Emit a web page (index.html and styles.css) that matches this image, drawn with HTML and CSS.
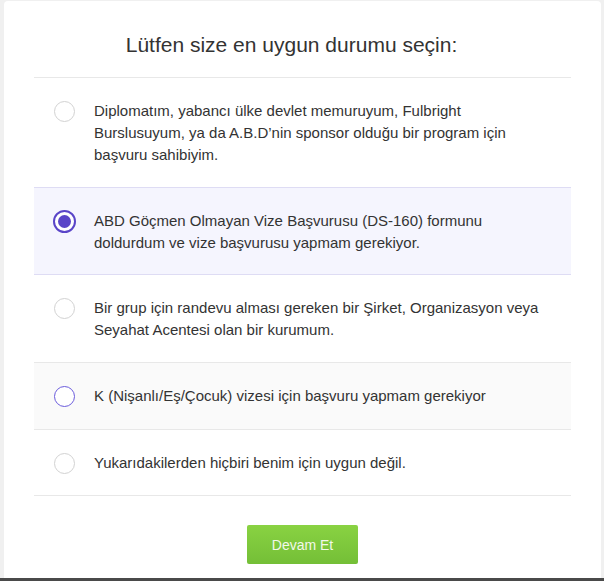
FILE: index.html
```html
<!DOCTYPE html>
<html lang="tr">
<head>
<meta charset="utf-8">
<title>Durum seçimi</title>
<link rel="stylesheet" href="styles.css">
</head>
<body>
<div class="page">
  <div class="card">
    <h1 class="title">Lütfen size en uygun durumu seçin:</h1>
    <ul class="options">
      <li class="option">
        <span class="radio"></span>
        <span class="label">Diplomatım, yabancı ülke devlet memuruyum, Fulbright Burslusuyum, ya da A.B.D’nin sponsor olduğu bir program için başvuru sahibiyim.</span>
      </li>
      <li class="option selected">
        <span class="radio checked"></span>
        <span class="label">ABD Göçmen Olmayan Vize Başvurusu (DS-160) formunu doldurdum ve vize başvurusu yapmam gerekiyor.</span>
      </li>
      <li class="option">
        <span class="radio"></span>
        <span class="label">Bir grup için randevu alması gereken bir Şirket, Organizasyon veya Seyahat Acentesi olan bir kurumum.</span>
      </li>
      <li class="option hover">
        <span class="radio focus"></span>
        <span class="label">K (Nişanlı/Eş/Çocuk) vizesi için başvuru yapmam gerekiyor</span>
      </li>
      <li class="option">
        <span class="radio"></span>
        <span class="label">Yukarıdakilerden hiçbiri benim için uygun değil.</span>
      </li>
    </ul>
    <div class="actions">
      <button class="btn" type="button">Devam Et</button>
    </div>
  </div>
  <div class="bottom-bar"></div>
</div>
</body>
</html>
```

FILE: styles.css
```css
* { box-sizing: border-box; }
html, body { margin: 0; padding: 0; }
body {
  background: #f0f0f0;
  font-family: "Liberation Sans", Arial, Helvetica, sans-serif;
  color: #333;
  width: 604px;
  height: 581px;
  overflow: hidden;
}
.page {
  display: flex;
  flex-direction: column;
  height: 581px;
}
.card {
  margin: 1px 3px 0 4px;
  height: 577px;
  background: #fff;
  border-radius: 4px 4px 0 0;
  padding: 32px 30px 0 30px;
}
.title {
  margin: 0 0 20px 0;
  padding-right: 22px;
  font-size: 21px;
  line-height: 24px;
  font-weight: normal;
  text-align: center;
  color: #333;
}
.options {
  list-style: none;
  margin: 0;
  padding: 0;
  border-bottom: 1px solid #e8e8e8;
}
.option {
  display: flex;
  align-items: flex-start;
  gap: 19px;
  padding: 22px 20px 21px 20px;
  border-top: 1px solid #e8e8e8;
  font-size: 15px;
  line-height: 22px;
  color: #333;
}
.option.selected {
  background: #f5f5fe;
  border-top-color: #dedcf4;
  border-bottom: 1px solid #dedcf4;
  padding-bottom: 20px;
}
.option.selected + .option { border-top: 0; }
.option.hover {
  background: #fafafa;
  padding-bottom: 22px;
}
.label { flex: 1; }
.radio {
  flex: none;
  width: 21px;
  height: 21px;
  margin-top: 0.5px;
  border: 1px solid #d2d2d2;
  border-radius: 50%;
  background: #fff;
  display: flex;
  align-items: center;
  justify-content: center;
}
.radio.checked {
  width: 23px;
  height: 23px;
  margin-top: -0.5px;
  margin-left: -1px;
  margin-right: -1px;
  border: 2px solid #5a45c8;
}
.radio.checked::after {
  content: "";
  width: 13px;
  height: 13px;
  border-radius: 50%;
  background: #5a45c8;
}
.radio.focus { border-color: #6a5bdc; }
.actions {
  display: flex;
  justify-content: center;
  padding-top: 29px;
}
.btn {
  width: 111px;
  height: 39px;
  border: 0;
  border-radius: 2px;
  background: linear-gradient(#89d242, #74bf37);
  color: #f2f8ea;
  font-family: "Liberation Sans", Arial, sans-serif;
  font-size: 14px;
  cursor: pointer;
}
.bottom-bar {
  height: 3px;
  background: #4a4a4a;
}
```
